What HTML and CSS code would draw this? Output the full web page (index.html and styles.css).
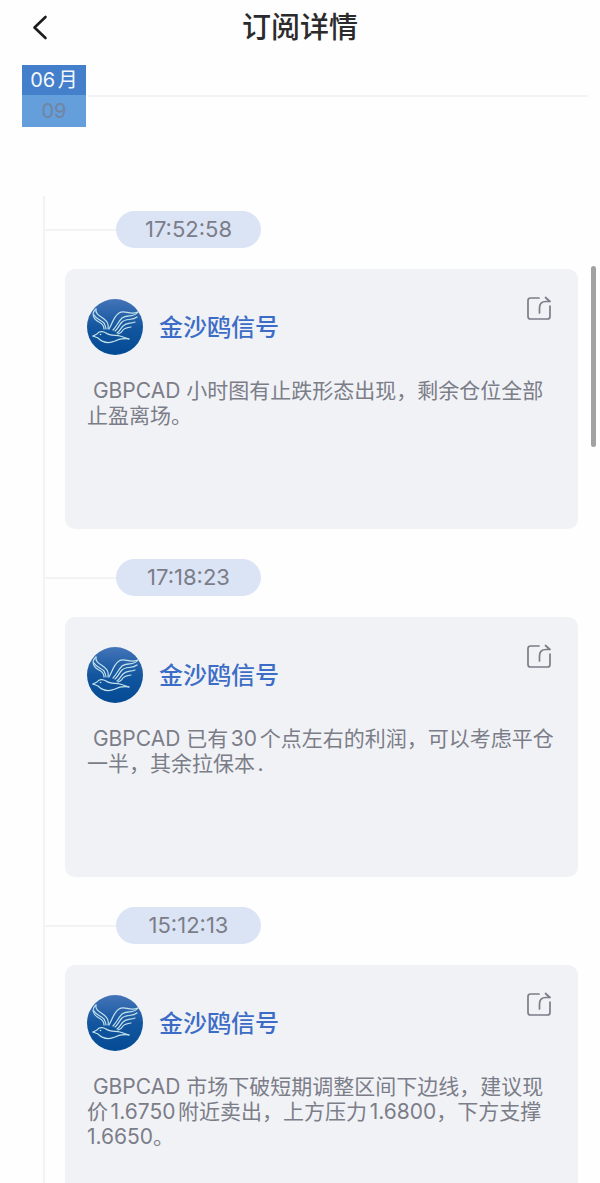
FILE: index.html
```html
<!DOCTYPE html>
<html lang="zh-CN">
<head>
  <meta charset="UTF-8">
  <meta name="viewport" content="width=device-width, initial-scale=1.0">
  <title>订阅详情</title>
  <link rel="stylesheet" href="styles.css">
</head>
<body>
  <svg class="sprite" aria-hidden="true">
    <defs>
      <linearGradient id="sky" x1="0" y1="0" x2="0" y2="1">
        <stop offset="0" stop-color="#4474b8"/>
        <stop offset="0.5" stop-color="#13569f"/>
        <stop offset="1" stop-color="#034a94"/>
      </linearGradient>
    </defs>
    <symbol id="gull" viewBox="0 0 56 56">
      <circle cx="28" cy="28" r="28" fill="url(#sky)"/>
      <g fill="none" stroke="#c3e2ec" stroke-width="1.200" stroke-linecap="round" stroke-linejoin="round">
        <path d="M9 10C4 14 6 20 12 23C16 25 17 27 17 30"/>
        <path d="M9 10C8 15 13 17 17 20C21 23 22 26 21 30"/>
        <path d="M7 16C9 20 14 21 17 24C18 26 19 28 19 30"/>
        <path d="M22 30C25 26 26 18 32 14C38 10 42 17 51 13"/>
        <path d="M51 13C47 19 40 15 35 19C31 23 30 27 26 31"/>
        <path d="M50 18C45 22 39 19 35 23C32 26 31 30 28 32"/>
        <path d="M48 23C43 25 40 23 36 27C34 29 33 32 30 34"/>
        <path d="M44 28C40 29 38 28 36 31C35 33 34 34 31 35"/>
        <path d="M6 37L10 35C12 32 16 32 19 34C23 37 28 36 33 37L42 40"/>
        <path d="M6 37L11 39C15 43 21 45 28 42C32 40 36 39 42 40"/>
      </g>
      <circle cx="13.500" cy="35.500" r="0.800" fill="#c3e2ec"/>
    </symbol>
    <symbol id="share" viewBox="0 0 26 26">
      <g fill="none" stroke="currentColor" stroke-width="1.700" stroke-linecap="round" stroke-linejoin="round">
        <path d="M13 3H4.500Q2 3 2 5.500V21.500Q2 24 4.500 24H21.500Q24 24 24 21.500V11"/>
        <path d="M13.500 18V13C13.500 9 16 6.500 20 6.500H24L19.500 2.500"/>
      </g>
    </symbol>
  </svg>

  <div class="app">
    <header class="top-bar">
      <button class="back-btn" aria-label="返回">
        <svg viewBox="0 0 16 26" width="16" height="26"><path d="M13.500 3L2.500 13.500L13.500 24" fill="none" stroke="#1c1c1e" stroke-width="2.600" stroke-linecap="round" stroke-linejoin="round"/></svg>
      </button>
      <h1>订阅详情</h1>
    </header>

    <div class="date-row">
      <div class="date-box">
        <div class="month">06月</div>
        <div class="day">09</div>
      </div>
    </div>

    <main class="timeline">
      <article class="entry">
        <div class="time-row"><time>17:52:58</time></div>
        <section class="card">
          <div class="card-head">
            <svg class="avatar"><use href="#gull"/></svg>
            <h2>金沙鸥信号</h2>
            <button class="share-btn" aria-label="分享"><svg width="26" height="26"><use href="#share"/></svg></button>
          </div>
          <p>&nbsp;GBPCAD 小时图有止跌形态出现，剩余仓位全部止盈离场。</p>
        </section>
      </article>

      <article class="entry">
        <div class="time-row"><time>17:18:23</time></div>
        <section class="card">
          <div class="card-head">
            <svg class="avatar"><use href="#gull"/></svg>
            <h2>金沙鸥信号</h2>
            <button class="share-btn" aria-label="分享"><svg width="26" height="26"><use href="#share"/></svg></button>
          </div>
          <p>&nbsp;GBPCAD 已有30个点左右的利润，可以考虑平仓一半，其余拉保本.</p>
        </section>
      </article>

      <article class="entry">
        <div class="time-row"><time>15:12:13</time></div>
        <section class="card">
          <div class="card-head">
            <svg class="avatar"><use href="#gull"/></svg>
            <h2>金沙鸥信号</h2>
            <button class="share-btn" aria-label="分享"><svg width="26" height="26"><use href="#share"/></svg></button>
          </div>
          <p>&nbsp;GBPCAD 市场下破短期调整区间下边线，建议现价1.6750附近卖出，上方压力1.6800，下方支撑1.6650。</p>
        </section>
      </article>
    </main>

    <div class="scroll-thumb"></div>
  </div>
</body>
</html>
```
FILE: styles.css
```css
* {
  box-sizing: border-box;
}

body {
  margin: 0;
  background-color: #fefefe;
  color: #7b7d88;
  font-family: Inter, "Noto Sans CJK SC", sans-serif;
  text-autospace: normal;
}

h1,
h2,
p {
  margin: 0;
}

button {
  padding: 0;
  border: none;
  background: none;
  cursor: pointer;
}

button svg {
  display: block;
}

.sprite {
  position: absolute;
  width: 0;
  height: 0;
}

.app {
  position: relative;
  display: flex;
  flex-direction: column;
  height: 100vh;
  overflow: hidden;
}

.top-bar {
  display: grid;
  grid-template-columns: 32px 1fr 32px;
  align-items: center;
  flex: none;
  height: 54px;
  padding: 0 32px;
}

.top-bar h1 {
  padding-top: 2px;
  color: #2b2b2d;
  font-size: 29px;
  font-weight: 500;
  line-height: 38px;
  text-align: center;
}

.date-row {
  display: flex;
  align-items: center;
  flex: none;
  gap: 2px;
  margin-top: 11px;
  padding: 0 12px 0 22px;
}

.date-row::after {
  content: "";
  flex: 1;
  height: 2px;
  background-color: #f3f3f5;
}

.date-box {
  width: 64px;
  font-size: 20px;
  text-align: center;
}

.month {
  height: 30px;
  background-color: #437fca;
  color: #f4f8fd;
  line-height: 30px;
}

.day {
  height: 32px;
  background-color: #649edb;
  color: #71859f;
  line-height: 32px;
}

.timeline {
  flex: 1;
  min-height: 0;
  margin: 69px 22px 0 43px;
  padding-top: 15px;
  border-left: 2px solid #f3f3f5;
  overflow-y: auto;
  scrollbar-width: none;
}

.entry {
  margin-bottom: 30px;
}

.time-row {
  display: flex;
  align-items: center;
}

.time-row::before {
  content: "";
  width: 71px;
  height: 2px;
  background-color: #f3f3f5;
}

time {
  width: 145px;
  border-radius: 19px;
  background-color: #dbe4f5;
  font-size: 22px;
  line-height: 37px;
  text-align: center;
}

.card {
  min-height: 260px;
  margin: 21px 0 0 20px;
  padding: 30px 22px;
  border-radius: 10px;
  background-color: #f1f2f6;
}

.card-head {
  display: flex;
  align-items: center;
  gap: 16px;
  margin-bottom: 23px;
}

.avatar {
  width: 56px;
  height: 56px;
}

.card h2 {
  flex: 1;
  padding-top: 2px;
  color: #3c6dc6;
  font-size: 24px;
  font-weight: 500;
  line-height: 30px;
}

.share-btn {
  align-self: flex-start;
  margin: -4px 4px 0 0;
  color: #7b7d88;
}

.card p {
  font-size: 21px;
  line-height: 25px;
}

/* scroll indicator floats over the feed */
.scroll-thumb {
  position: absolute;
  top: 266px;
  right: 4px;
  width: 5px;
  height: 181px;
  border-radius: 3px;
  background-color: #a2a2a4;
}
```
